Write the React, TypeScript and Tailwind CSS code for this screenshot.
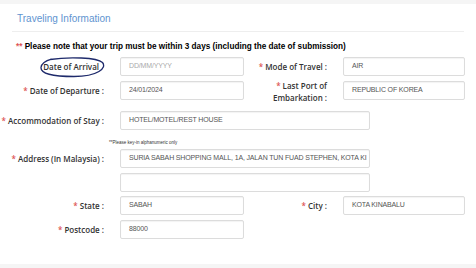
import type { ReactNode } from "react";

const labelCls =
  "shrink-0 text-right text-[8px] font-semibold leading-[10px] text-[#333] [font-family:'Open_Sans',sans-serif]";
const inputCls =
  "flex h-[19px] shrink-0 items-center overflow-hidden rounded-[2px] border border-[#dcdcdc] bg-white px-[8px] text-[7px] tracking-[-0.15px] text-[#555] shadow-[inset_0_1px_1px_rgba(0,0,0,0.05)] [font-family:'Liberation_Sans',Arial,sans-serif]";

function Star() {
  return <span className="text-[#dd5555]">* </span>;
}

function Field({ value, width, muted }: { value?: string; width: string; muted?: boolean }) {
  return (
    <div className={`${inputCls} ${width} ${muted ? "text-[#aaa]" : ""}`}>
      <span className="whitespace-nowrap">{value}</span>
    </div>
  );
}

function Label({ children, width, className = "" }: { children: ReactNode; width: string; className?: string }) {
  return <div className={`${labelCls} ${width} ${className}`}>{children}</div>;
}

export default function App() {
  return (
    <div className="flex h-[268px] w-[476px] flex-col bg-[#f5f5f5] pt-[4px] pb-[4px]">
      <div className="flex-1 bg-white">
        <div className="mx-[12px] border-b border-[#eeeeee] pl-[5px] pt-[9px] pb-[6px]">
          <h2 className="text-[10px] leading-[12px] text-[#5f94d0] [font-family:'Liberation_Sans',Arial,sans-serif]">
            Traveling Information
          </h2>
        </div>

        <p className="mt-[10px] pl-[16px] text-[8.2px] font-bold leading-[10px] text-black [font-family:'Liberation_Sans',Arial,sans-serif]">
          <span className="text-[#dd5555]">** </span>
          Please note that your trip must be within 3 days (including the date of submission)
        </p>

        <div className="mt-[5px] flex flex-col">
          <div className="flex items-center">
            <div className="relative w-[104px] shrink-0">
              <Label width="w-[104px]">
                <span className="pr-[5px]">Date of Arrival</span>
              </Label>
              <svg
                className="absolute top-[-5px] left-[39px] h-[21px] w-[67px]"
                viewBox="0 0 67 21"
                fill="none"
              >
                <path
                  d="M11 2.5 C30 -0.5 58 0.5 63.5 5.5 C68 11 59 19.5 35 19.5 C13 19.5 1.5 16.5 2 10.5 C2.5 6.5 6 4 12.5 2.2"
                  stroke="#1e2a6b"
                  strokeWidth="1.3"
                />
              </svg>
            </div>
            <div className="ml-[16px]">
              <Field value="DD/MM/YYYY" width="w-[124px]" muted />
            </div>
            <Label width="w-[83px]">
              <Star />
              Mode of Travel :
            </Label>
            <div className="ml-[16px]">
              <Field value="AIR" width="w-[122px]" />
            </div>
          </div>

          <div className="mt-[5px] flex h-[19px] items-center">
            <Label width="w-[104px]">
              <Star />
              Date of Departure :
            </Label>
            <div className="ml-[16px]">
              <Field value="24/01/2024" width="w-[124px]" />
            </div>
            <Label width="w-[83px]" className="pt-[3px] leading-[12.5px]">
              <Star />
              Last Port of
              <br />
              Embarkation :
            </Label>
            <div className="ml-[16px]">
              <Field value="REPUBLIC OF KOREA" width="w-[122px]" />
            </div>
          </div>

          <div className="mt-[11px] flex items-center">
            <Label width="w-[104px]">
              <Star />
              Accommodation of Stay :
            </Label>
            <div className="ml-[16px]">
              <Field value="HOTEL/MOTEL/REST HOUSE" width="w-[250px]" />
            </div>
          </div>

          <p className="mt-[9px] pl-[109px] text-[4.5px] leading-[8px] text-[#333] [font-family:'Liberation_Sans',Arial,sans-serif]">
            **Please key-in alphanumeric only
          </p>

          <div className="mt-[2px] flex items-center">
            <Label width="w-[104px]">
              <Star />
              Address (In Malaysia) :
            </Label>
            <div className="ml-[16px]">
              <Field
                value="SURIA SABAH SHOPPING MALL, 1A, JALAN TUN FUAD STEPHEN, KOTA KI"
                width="w-[250px] text-[6.6px]"
              />
            </div>
          </div>

          <div className="mt-[5px] flex items-center">
            <div className="ml-[120px]">
              <Field width="w-[250px]" />
            </div>
          </div>

          <div className="mt-[4px] flex items-center">
            <Label width="w-[104px]">
              <Star />
              State :
            </Label>
            <div className="ml-[16px]">
              <Field value="SABAH" width="w-[124px]" />
            </div>
            <Label width="w-[83px]">
              <Star />
              City :
            </Label>
            <div className="ml-[16px]">
              <Field value="KOTA KINABALU" width="w-[122px]" />
            </div>
          </div>

          <div className="mt-[5px] flex items-center">
            <Label width="w-[104px]">
              <Star />
              Postcode :
            </Label>
            <div className="ml-[16px]">
              <Field value="88000" width="w-[124px]" />
            </div>
          </div>
        </div>
      </div>
    </div>
  );
}
